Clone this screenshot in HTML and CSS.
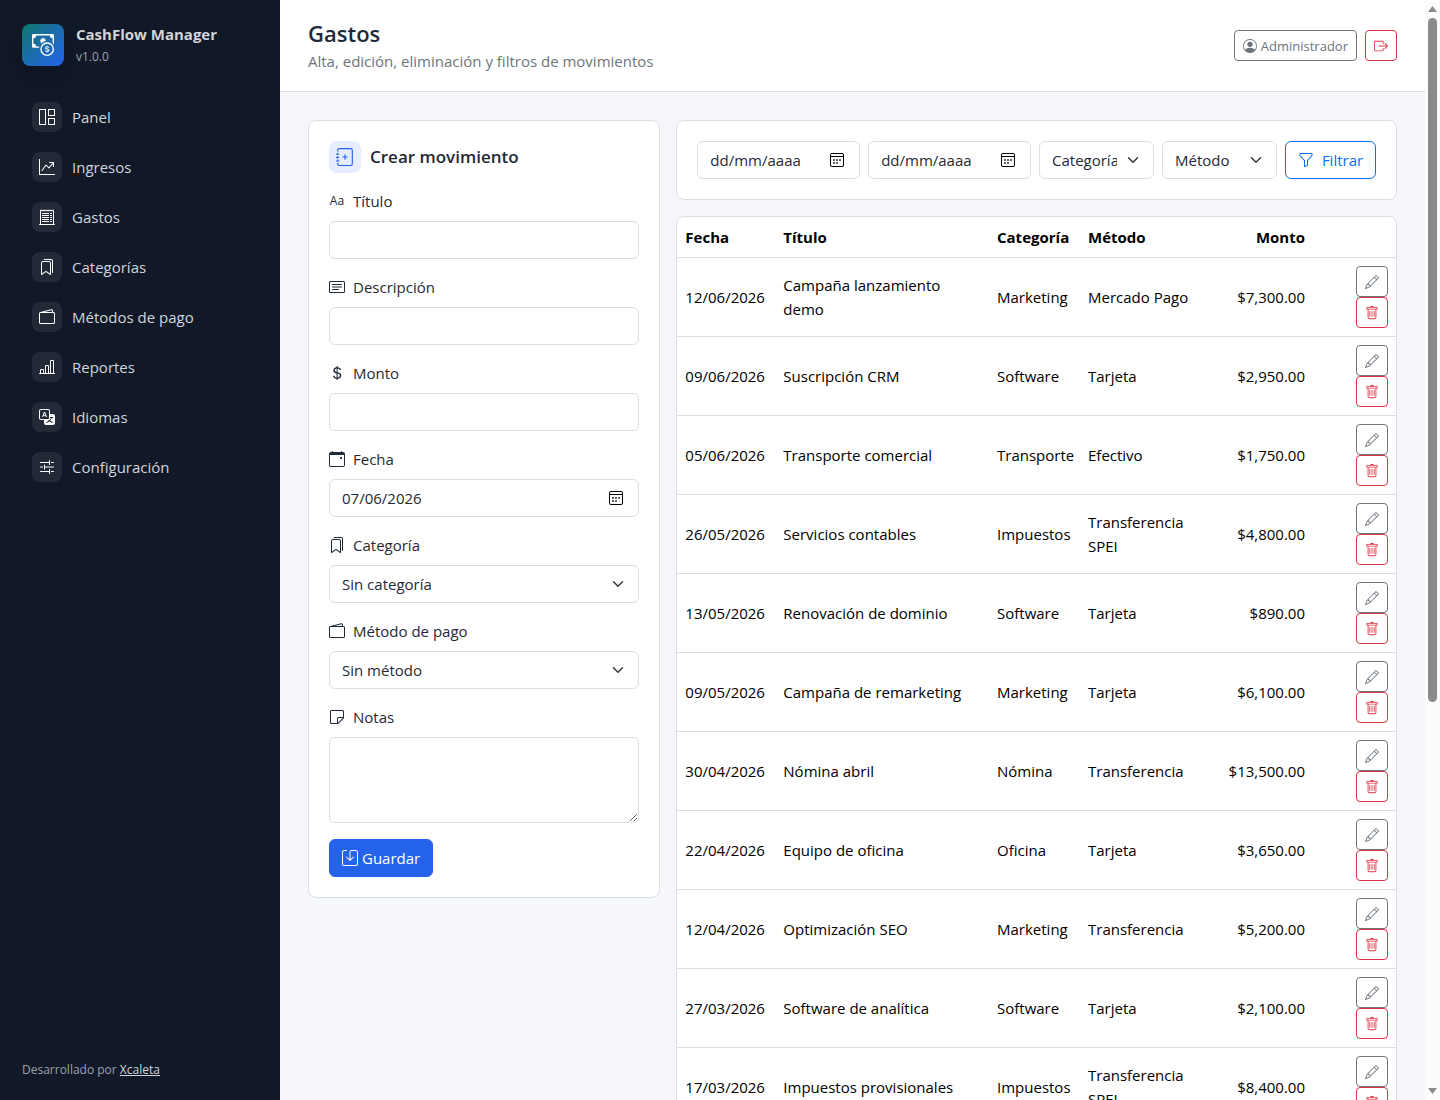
FILE: index.html
```html
<!DOCTYPE html>
<html lang="es">
<head>
<meta charset="utf-8">
<meta name="viewport" content="width=device-width, initial-scale=1">
<title>Gastos - CashFlow Manager</title>
<link rel="stylesheet" href="styles.css">
</head>
<body>
<svg class="sprite" aria-hidden="true">
  <symbol id="cash-coin" viewBox="0 0 16 16"><path fill-rule="evenodd" d="M11 15a4 4 0 1 0 0-8 4 4 0 0 0 0 8m5-4a5 5 0 1 1-10 0 5 5 0 0 1 10 0"/><path d="M9.438 11.944c.047.596.518 1.06 1.363 1.116v.44h.375v-.443c.875-.061 1.386-.529 1.386-1.207 0-.618-.39-.936-1.09-1.1l-.296-.07v-1.2c.376.043.614.248.671.532h.658c-.047-.575-.54-1.024-1.329-1.073V8.5h-.375v.45c-.747.073-1.255.522-1.255 1.158 0 .562.378.92 1.007 1.066l.248.061v1.272c-.384-.058-.639-.27-.696-.563h-.668zm1.36-1.354c-.369-.085-.569-.26-.569-.522 0-.294.216-.514.572-.578v1.1zm.432.746c.449.104.655.272.655.569 0 .339-.257.571-.709.614v-1.195z"/><path d="M1 0a1 1 0 0 0-1 1v8a1 1 0 0 0 1 1h4.083q.088-.517.258-1H3a2 2 0 0 0-2-2V3a2 2 0 0 0 2-2h10a2 2 0 0 0 2 2v3.528c.38.34.717.728 1 1.154V1a1 1 0 0 0-1-1z"/><path d="M9.998 5.083 10 5a2 2 0 1 0-3.132 1.65 6 6 0 0 1 3.13-1.567"/></symbol>
  <symbol id="panel" viewBox="0 0 16 16"><path fill-rule="evenodd" d="M0 0h7v16H0zm1 1v14h5V1zM9 0h7v7H9zm1 1v5h5V1zM9 9h7v7H9zm1 1v5h5v-5z"/></symbol>
  <symbol id="graph-up" viewBox="0 0 16 16"><path fill-rule="evenodd" d="M0 0h1v15h15v1H0zm10 3.5a.5.5 0 0 1 .5-.5h4a.5.5 0 0 1 .5.5v4a.5.5 0 0 1-1 0V4.9l-3.613 4.417a.5.5 0 0 1-.74.037L7.06 6.767l-3.656 5.027a.5.5 0 0 1-.808-.588l4-5.5a.5.5 0 0 1 .758-.06l2.609 2.61L13.445 4H10.5a.5.5 0 0 1-.5-.5"/></symbol>
  <symbol id="receipt" viewBox="0 0 16 16"><path d="M3 4h7v1H3zm0 2h7v1H3zm0 2h7v1H3zm0 2h7v1H3zm0 2h7v1H3zM11 4h2v1h-2zm0 2h2v1h-2zm0 2h2v1h-2zm0 2h2v1h-2zm0 2h2v1h-2z"/><path d="M2.354.646a.5.5 0 0 0-.801.13l-.5 1A.5.5 0 0 0 1 2v13H.5a.5.5 0 0 0 0 1h15a.5.5 0 0 0 0-1H15V2a.5.5 0 0 0-.053-.224l-.5-1a.5.5 0 0 0-.8-.13L13 1.293l-.646-.647a.5.5 0 0 0-.708 0L11 1.293l-.646-.647a.5.5 0 0 0-.708 0L9 1.293 8.354.646a.5.5 0 0 0-.708 0L7 1.293 6.354.646a.5.5 0 0 0-.708 0L5 1.293 4.354.646a.5.5 0 0 0-.708 0L3 1.293zm-.217 1.198.51.51a.5.5 0 0 0 .707 0L4 1.707l.646.647a.5.5 0 0 0 .708 0L6 1.707l.646.647a.5.5 0 0 0 .708 0L8 1.707l.646.647a.5.5 0 0 0 .708 0L10 1.707l.646.647a.5.5 0 0 0 .708 0L12 1.707l.646.647a.5.5 0 0 0 .708 0l.509-.51.137.274V15H2V2.118z"/></symbol>
  <symbol id="bookmarks" viewBox="0 0 16 16"><path d="M2 4a2 2 0 0 1 2-2h6a2 2 0 0 1 2 2v11.5a.5.5 0 0 1-.777.416L7 13.101l-4.223 2.815A.5.5 0 0 1 2 15.5zm2-1a1 1 0 0 0-1 1v10.566l3.723-2.482a.5.5 0 0 1 .554 0L11 14.566V4a1 1 0 0 0-1-1z"/><path d="M4.268 1H12a1 1 0 0 1 1 1v11.768l.223.148A.5.5 0 0 0 14 13.5V2a2 2 0 0 0-2-2H6a2 2 0 0 0-1.732 1"/></symbol>
  <symbol id="wallet" viewBox="0 0 16 16"><path d="M12.136.326A1.5 1.5 0 0 1 14 1.78V3h.5A1.5 1.5 0 0 1 16 4.5v9a1.5 1.5 0 0 1-1.5 1.5h-13A1.5 1.5 0 0 1 0 13.5v-9a1.5 1.5 0 0 1 1.432-1.499zM5.562 3H13V1.78a.5.5 0 0 0-.621-.484zM1.5 4a.5.5 0 0 0-.5.5v9a.5.5 0 0 0 .5.5h13a.5.5 0 0 0 .5-.5v-9a.5.5 0 0 0-.5-.5z"/></symbol>
  <symbol id="bars" viewBox="0 0 16 16"><path d="M11 2a1 1 0 0 1 1-1h2a1 1 0 0 1 1 1v12h.5a.5.5 0 0 1 0 1H.5a.5.5 0 0 1 0-1H1v-3a1 1 0 0 1 1-1h2a1 1 0 0 1 1 1v3h1V7a1 1 0 0 1 1-1h2a1 1 0 0 1 1 1v7h1zm1 12h2V2h-2zm-3 0V7H7v7zm-5 0v-3H2v3z"/></symbol>
  <symbol id="translate" viewBox="0 0 16 16"><path d="M4.545 6.714 4.11 8H3l1.862-5h1.284L8 8H6.833l-.435-1.286zm1.634-.736L5.5 3.956h-.049l-.679 2.022z"/><path d="M0 2a2 2 0 0 1 2-2h7a2 2 0 0 1 2 2v3h3a2 2 0 0 1 2 2v7a2 2 0 0 1-2 2H7a2 2 0 0 1-2-2v-3H2a2 2 0 0 1-2-2zm2-1a1 1 0 0 0-1 1v7a1 1 0 0 0 1 1h7a1 1 0 0 0 1-1V2a1 1 0 0 0-1-1zm7.138 9.995q.289.451.63.846c-.748.575-1.673 1.001-2.768 1.292.178.217.451.635.555.867 1.125-.359 2.08-.844 2.886-1.494.777.665 1.739 1.165 2.93 1.472.133-.254.414-.673.629-.89-1.125-.253-2.057-.694-2.82-1.284.681-.747 1.222-1.651 1.621-2.757H14V8h-3v1.047h.765c-.318.844-.74 1.546-1.272 2.13a6 6 0 0 1-.415-.492 2 2 0 0 1-.94.31"/></symbol>
  <symbol id="sliders" viewBox="0 0 16 16"><path d="M10.5 1a.5.5 0 0 1 .5.5v4a.5.5 0 0 1-1 0V4H1.5a.5.5 0 0 1 0-1H10V1.5a.5.5 0 0 1 .5-.5M12 3.5a.5.5 0 0 1 .5-.5h2a.5.5 0 0 1 0 1h-2a.5.5 0 0 1-.5-.5m-6.5 2A.5.5 0 0 1 6 6v1.5h8.5a.5.5 0 0 1 0 1H6V10a.5.5 0 0 1-1 0V6a.5.5 0 0 1 .5-.5M1 8a.5.5 0 0 1 .5-.5h2a.5.5 0 0 1 0 1h-2A.5.5 0 0 1 1 8m9.5 2a.5.5 0 0 1 .5.5v4a.5.5 0 0 1-1 0V13H1.5a.5.5 0 0 1 0-1H10v-1.5a.5.5 0 0 1 .5-.5m1.5 2.5a.5.5 0 0 1 .5-.5h2a.5.5 0 0 1 0 1h-2a.5.5 0 0 1-.5-.5"/></symbol>
  <symbol id="journal-plus" viewBox="0 0 16 16"><path d="M8 5.5a.5.5 0 0 1 .5.5v1.5H10a.5.5 0 0 1 0 1H8.5V10a.5.5 0 0 1-1 0V8.5H6a.5.5 0 0 1 0-1h1.5V6a.5.5 0 0 1 .5-.5"/><path d="M3 0h10a2 2 0 0 1 2 2v12a2 2 0 0 1-2 2H3a2 2 0 0 1-2-2v-1h1v1a1 1 0 0 0 1 1h10a1 1 0 0 0 1-1V2a1 1 0 0 0-1-1H3a1 1 0 0 0-1 1v1H1V2a2 2 0 0 1 2-2"/><path d="M1 5v-.5a.5.5 0 0 1 1 0V5h.5a.5.5 0 0 1 0 1h-2a.5.5 0 0 1 0-1zm0 3v-.5a.5.5 0 0 1 1 0V8h.5a.5.5 0 0 1 0 1h-2a.5.5 0 0 1 0-1zm0 3v-.5a.5.5 0 0 1 1 0v.5h.5a.5.5 0 0 1 0 1h-2a.5.5 0 0 1 0-1z"/></symbol>
  <symbol id="card-text" viewBox="0 0 16 16"><path d="M14.5 3a.5.5 0 0 1 .5.5v9a.5.5 0 0 1-.5.5h-13a.5.5 0 0 1-.5-.5v-9a.5.5 0 0 1 .5-.5zm-13-1A1.5 1.5 0 0 0 0 3.5v9A1.5 1.5 0 0 0 1.5 14h13a1.5 1.5 0 0 0 1.5-1.5v-9A1.5 1.5 0 0 0 14.5 2z"/><path d="M3 5.5a.5.5 0 0 1 .5-.5h9a.5.5 0 0 1 0 1h-9a.5.5 0 0 1-.5-.5M3 8a.5.5 0 0 1 .5-.5h9a.5.5 0 0 1 0 1h-9A.5.5 0 0 1 3 8m0 2.5a.5.5 0 0 1 .5-.5h6a.5.5 0 0 1 0 1h-6a.5.5 0 0 1-.5-.5"/></symbol>
  <symbol id="dollar" viewBox="0 0 16 16"><path d="M4 10.781c.148 1.667 1.513 2.85 3.591 3.003V15h1.043v-1.216c2.27-.179 3.678-1.438 3.678-3.3 0-1.59-.947-2.51-2.956-3.028l-.722-.187V3.467c1.122.11 1.879.714 2.07 1.616h1.47c-.166-1.6-1.54-2.748-3.54-2.875V1H7.591v1.233c-1.939.23-3.27 1.472-3.27 3.156 0 1.454.966 2.483 2.661 2.917l.61.162v4.031c-1.149-.17-1.94-.8-2.131-1.718zm3.391-3.836c-1.043-.263-1.6-.825-1.6-1.616 0-.944.704-1.641 1.8-1.828v3.495l-.2-.05zm1.591 1.872c1.287.323 1.852.859 1.852 1.769 0 1.097-.826 1.828-2.2 1.939V8.73z"/></symbol>
  <symbol id="calendar" viewBox="0 0 16 16"><path d="M11 6.5a.5.5 0 0 1 .5-.5h1a.5.5 0 0 1 .5.5v1a.5.5 0 0 1-.5.5h-1a.5.5 0 0 1-.5-.5z"/><path d="M3.5 0a.5.5 0 0 1 .5.5V1h8V.5a.5.5 0 0 1 1 0V1h1a2 2 0 0 1 2 2v11a2 2 0 0 1-2 2H2a2 2 0 0 1-2-2V3a2 2 0 0 1 2-2h1V.5a.5.5 0 0 1 .5-.5M1 4v10a1 1 0 0 0 1 1h12a1 1 0 0 0 1-1V4z"/></symbol>
  <symbol id="sticky" viewBox="0 0 16 16"><path d="M2.5 1A1.5 1.5 0 0 0 1 2.5v11A1.5 1.5 0 0 0 2.5 15h6.086a1.5 1.5 0 0 0 1.06-.44l4.915-4.914A1.5 1.5 0 0 0 15 8.586V2.5A1.5 1.5 0 0 0 13.5 1zM2 2.5a.5.5 0 0 1 .5-.5h11a.5.5 0 0 1 .5.5V8H9.5A1.5 1.5 0 0 0 8 9.5V14H2.5a.5.5 0 0 1-.5-.5zm7 11.293V9.5a.5.5 0 0 1 .5-.5h4.293z"/></symbol>
  <symbol id="save" viewBox="0 0 16 16"><path d="M2 1a1 1 0 0 0-1 1v12a1 1 0 0 0 1 1h12a1 1 0 0 0 1-1V2a1 1 0 0 0-1-1H9.5a1 1 0 0 0-1 1v7.293l2.646-2.647a.5.5 0 0 1 .708.708l-3.5 3.5a.5.5 0 0 1-.708 0l-3.5-3.5a.5.5 0 1 1 .708-.708L7.5 9.293V2a2 2 0 0 1 2-2H14a2 2 0 0 1 2 2v12a2 2 0 0 1-2 2H2a2 2 0 0 1-2-2V2a2 2 0 0 1 2-2h2.500a.5.5 0 0 1 0 1z"/></symbol>
  <symbol id="person" viewBox="0 0 16 16"><path d="M11 6a3 3 0 1 1-6 0 3 3 0 0 1 6 0"/><path fill-rule="evenodd" d="M0 8a8 8 0 1 1 16 0A8 8 0 0 1 0 8m8-7a7 7 0 0 0-5.468 11.37C3.242 11.226 4.805 10 8 10s4.757 1.225 5.468 2.37A7 7 0 0 0 8 1"/></symbol>
  <symbol id="logout" viewBox="0 0 16 16"><path d="M10 12.5a.5.5 0 0 1-.5.5h-8a.5.5 0 0 1-.5-.5v-9a.5.5 0 0 1 .5-.5h8a.5.5 0 0 1 .5.5v2a.5.5 0 0 0 1 0v-2A1.5 1.5 0 0 0 9.5 2h-8A1.5 1.5 0 0 0 0 3.5v9A1.5 1.5 0 0 0 1.5 14h8a1.5 1.5 0 0 0 1.5-1.5v-2a.5.5 0 0 0-1 0z"/><path d="M15.854 8.354a.5.5 0 0 0 0-.708l-3-3a.5.5 0 0 0-.708.708L14.293 7.5H5.5a.5.5 0 0 0 0 1h8.793l-2.147 2.146a.5.5 0 0 0 .708.708z"/></symbol>
  <symbol id="funnel" viewBox="0 0 16 16"><path d="M1.500 1.5A.5.5 0 0 1 2 1h12a.5.5 0 0 1 .5.5v2a.5.5 0 0 1-.128.334L10 8.692V13.5a.5.5 0 0 1-.342.474l-3 1A.5.5 0 0 1 6 14.5V8.692L1.628 3.834A.5.5 0 0 1 1.5 3.5zm1 .5v1.308l4.372 4.858A.5.5 0 0 1 7 8.5v5.306l2-.666V8.5a.5.5 0 0 1 .128-.334L13.5 3.308V2z"/></symbol>
  <symbol id="pencil" viewBox="0 0 16 16"><path d="M12.146.146a.5.5 0 0 1 .708 0l3 3a.5.5 0 0 1 0 .708l-10 10a.5.5 0 0 1-.168.11l-5 2a.5.5 0 0 1-.65-.65l2-5a.5.5 0 0 1 .11-.168zM11.207 2.5 13.5 4.793 14.793 3.5 12.5 1.207zm1.586 3L10.5 3.207 4 9.707V10h.5a.5.5 0 0 1 .5.5v.5h.5a.5.5 0 0 1 .5.5v.5h.293zm-9.761 5.175-.106.106-1.528 3.821 3.821-1.528.106-.106A.5.5 0 0 1 5 12.5V12h-.5a.5.5 0 0 1-.5-.5V11h-.5a.5.5 0 0 1-.468-.325"/></symbol>
  <symbol id="trash" viewBox="0 0 16 16"><path d="M5.500 5.500A.5.500 0 0 1 6 6v6a.5.500 0 0 1-1 0V6a.5.500 0 0 1 .5-.5m2.500 0a.5.500 0 0 1 .5.5v6a.5.500 0 0 1-1 0V6a.5.500 0 0 1 .5-.5m3 .5a.5.500 0 0 0-1 0v6a.5.500 0 0 0 1 0z"/><path d="M14.5 3a1 1 0 0 1-1 1H13v9a2 2 0 0 1-2 2H5a2 2 0 0 1-2-2V4h-.5a1 1 0 0 1-1-1V2a1 1 0 0 1 1-1H6a1 1 0 0 1 1-1h2a1 1 0 0 1 1 1h3.500a1 1 0 0 1 1 1zM4.118 4 4 4.059V13a1 1 0 0 0 1 1h6a1 1 0 0 0 1-1V4.059L11.882 4zM2.500 3h11V2h-11z"/></symbol>
  <symbol id="picker" viewBox="0 0 16 16"><path fill-rule="evenodd" d="M3 1h10a2 2 0 0 1 2 2v10a2 2 0 0 1-2 2H3a2 2 0 0 1-2-2V3a2 2 0 0 1 2-2m-1 4v8a1 1 0 0 0 1 1h10a1 1 0 0 0 1-1V5zm0-1h12V3a1 1 0 0 0-1-1H3a1 1 0 0 0-1 1z"/><path d="M4.200 7.200h1.600v1.600H4.200zm3 0h1.600v1.600H7.200zm3 0h1.600v1.600h-1.600zm-6 3h1.600v1.600H4.200zm3 0h1.600v1.600H7.200z"/></symbol>
</svg>
<div class="app">
  <aside class="sidebar">
    <div class="brand">
      <span class="brand-mark"><svg class="icon icon-brand"><use href="#cash-coin"/></svg></span>
      <div class="brand-text"><strong>CashFlow Manager</strong><small>v1.0.0</small></div>
    </div>
    <nav class="menu">
      <a href="#panel-page"><span class="menu-icon"><svg class="icon"><use href="#panel"/></svg></span>Panel</a>
      <a href="#ingresos"><span class="menu-icon"><svg class="icon"><use href="#graph-up"/></svg></span>Ingresos</a>
      <a href="#gastos"><span class="menu-icon"><svg class="icon"><use href="#receipt"/></svg></span>Gastos</a>
      <a href="#categorias"><span class="menu-icon"><svg class="icon"><use href="#bookmarks"/></svg></span>Categorías</a>
      <a href="#metodos"><span class="menu-icon"><svg class="icon"><use href="#wallet"/></svg></span>Métodos de pago</a>
      <a href="#reportes"><span class="menu-icon"><svg class="icon"><use href="#bars"/></svg></span>Reportes</a>
      <a href="#idiomas"><span class="menu-icon"><svg class="icon"><use href="#translate"/></svg></span>Idiomas</a>
      <a href="#configuracion"><span class="menu-icon"><svg class="icon"><use href="#sliders"/></svg></span>Configuración</a>
    </nav>
    <p class="credit">Desarrollado por <a href="#xcaleta">Xcaleta</a></p>
  </aside>

  <div class="page">
    <header class="topbar">
      <div>
        <h1>Gastos</h1>
        <p>Alta, edición, eliminación y filtros de movimientos</p>
      </div>
      <div class="topbar-actions">
        <button type="button" class="btn btn-sm btn-gray"><svg class="icon icon-sm"><use href="#person"/></svg>Administrador</button>
        <button type="button" class="btn btn-sm btn-red" aria-label="Salir"><svg class="icon icon-sm"><use href="#logout"/></svg></button>
      </div>
    </header>

    <main class="content">
      <form class="card entry">
        <h2><span class="title-icon"><svg class="icon"><use href="#journal-plus"/></svg></span>Crear movimiento</h2>
        <div class="field">
          <label for="titulo"><span class="glyph" aria-hidden="true">Aa</span>Título</label>
          <input class="control" id="titulo" type="text">
        </div>
        <div class="field">
          <label for="descripcion"><svg class="icon"><use href="#card-text"/></svg>Descripción</label>
          <input class="control" id="descripcion" type="text">
        </div>
        <div class="field">
          <label for="monto"><svg class="icon"><use href="#dollar"/></svg>Monto</label>
          <input class="control" id="monto" type="text" inputmode="decimal">
        </div>
        <div class="field">
          <label for="fecha"><svg class="icon"><use href="#calendar"/></svg>Fecha</label>
          <div class="control date"><input id="fecha" type="text" value="07/06/2026"><button type="button" aria-label="Abrir calendario"><svg class="icon"><use href="#picker"/></svg></button></div>
        </div>
        <div class="field">
          <label for="categoria"><svg class="icon"><use href="#bookmarks"/></svg>Categoría</label>
          <select class="control" id="categoria"><option>Sin categoría</option></select>
        </div>
        <div class="field">
          <label for="metodo"><svg class="icon"><use href="#wallet"/></svg>Método de pago</label>
          <select class="control" id="metodo"><option>Sin método</option></select>
        </div>
        <div class="field">
          <label for="notas"><svg class="icon"><use href="#sticky"/></svg>Notas</label>
          <textarea class="control" id="notas"></textarea>
        </div>
        <button type="submit" class="btn btn-save"><svg class="icon"><use href="#save"/></svg>Guardar</button>
      </form>

      <section class="listing">
        <form class="card filters">
          <div class="control date"><input type="text" placeholder="dd/mm/aaaa" aria-label="Desde"><button type="button" aria-label="Abrir calendario"><svg class="icon"><use href="#picker"/></svg></button></div>
          <div class="control date"><input type="text" placeholder="dd/mm/aaaa" aria-label="Hasta"><button type="button" aria-label="Abrir calendario"><svg class="icon"><use href="#picker"/></svg></button></div>
          <select class="control" aria-label="Categoría"><option>Categoría</option></select>
          <select class="control" aria-label="Método"><option>Método</option></select>
          <button type="submit" class="btn btn-blue"><svg class="icon"><use href="#funnel"/></svg>Filtrar</button>
        </form>

        <div class="card table-card">
          <table>
            <colgroup><col class="c-date"><col><col class="c-cat"><col class="c-method"><col class="c-amount"><col class="c-actions"></colgroup>
            <thead>
              <tr><th>Fecha</th><th>Título</th><th>Categoría</th><th>Método</th><th class="num">Monto</th><th></th></tr>
            </thead>
            <tbody>
              <tr><td>12/06/2026</td><td>Campaña lanzamiento demo</td><td>Marketing</td><td>Mercado Pago</td><td class="num">$7,300.00</td><td><div class="actions"><button type="button" class="btn btn-sm btn-gray" aria-label="Editar"><svg class="icon icon-sm"><use href="#pencil"/></svg></button><button type="button" class="btn btn-sm btn-red" aria-label="Eliminar"><svg class="icon icon-sm"><use href="#trash"/></svg></button></div></td></tr>
              <tr><td>09/06/2026</td><td>Suscripción CRM</td><td>Software</td><td>Tarjeta</td><td class="num">$2,950.00</td><td><div class="actions"><button type="button" class="btn btn-sm btn-gray" aria-label="Editar"><svg class="icon icon-sm"><use href="#pencil"/></svg></button><button type="button" class="btn btn-sm btn-red" aria-label="Eliminar"><svg class="icon icon-sm"><use href="#trash"/></svg></button></div></td></tr>
              <tr><td>05/06/2026</td><td>Transporte comercial</td><td>Transporte</td><td>Efectivo</td><td class="num">$1,750.00</td><td><div class="actions"><button type="button" class="btn btn-sm btn-gray" aria-label="Editar"><svg class="icon icon-sm"><use href="#pencil"/></svg></button><button type="button" class="btn btn-sm btn-red" aria-label="Eliminar"><svg class="icon icon-sm"><use href="#trash"/></svg></button></div></td></tr>
              <tr><td>26/05/2026</td><td>Servicios contables</td><td>Impuestos</td><td>Transferencia SPEI</td><td class="num">$4,800.00</td><td><div class="actions"><button type="button" class="btn btn-sm btn-gray" aria-label="Editar"><svg class="icon icon-sm"><use href="#pencil"/></svg></button><button type="button" class="btn btn-sm btn-red" aria-label="Eliminar"><svg class="icon icon-sm"><use href="#trash"/></svg></button></div></td></tr>
              <tr><td>13/05/2026</td><td>Renovación de dominio</td><td>Software</td><td>Tarjeta</td><td class="num">$890.00</td><td><div class="actions"><button type="button" class="btn btn-sm btn-gray" aria-label="Editar"><svg class="icon icon-sm"><use href="#pencil"/></svg></button><button type="button" class="btn btn-sm btn-red" aria-label="Eliminar"><svg class="icon icon-sm"><use href="#trash"/></svg></button></div></td></tr>
              <tr><td>09/05/2026</td><td>Campaña de remarketing</td><td>Marketing</td><td>Tarjeta</td><td class="num">$6,100.00</td><td><div class="actions"><button type="button" class="btn btn-sm btn-gray" aria-label="Editar"><svg class="icon icon-sm"><use href="#pencil"/></svg></button><button type="button" class="btn btn-sm btn-red" aria-label="Eliminar"><svg class="icon icon-sm"><use href="#trash"/></svg></button></div></td></tr>
              <tr><td>30/04/2026</td><td>Nómina abril</td><td>Nómina</td><td>Transferencia</td><td class="num">$13,500.00</td><td><div class="actions"><button type="button" class="btn btn-sm btn-gray" aria-label="Editar"><svg class="icon icon-sm"><use href="#pencil"/></svg></button><button type="button" class="btn btn-sm btn-red" aria-label="Eliminar"><svg class="icon icon-sm"><use href="#trash"/></svg></button></div></td></tr>
              <tr><td>22/04/2026</td><td>Equipo de oficina</td><td>Oficina</td><td>Tarjeta</td><td class="num">$3,650.00</td><td><div class="actions"><button type="button" class="btn btn-sm btn-gray" aria-label="Editar"><svg class="icon icon-sm"><use href="#pencil"/></svg></button><button type="button" class="btn btn-sm btn-red" aria-label="Eliminar"><svg class="icon icon-sm"><use href="#trash"/></svg></button></div></td></tr>
              <tr><td>12/04/2026</td><td>Optimización SEO</td><td>Marketing</td><td>Transferencia</td><td class="num">$5,200.00</td><td><div class="actions"><button type="button" class="btn btn-sm btn-gray" aria-label="Editar"><svg class="icon icon-sm"><use href="#pencil"/></svg></button><button type="button" class="btn btn-sm btn-red" aria-label="Eliminar"><svg class="icon icon-sm"><use href="#trash"/></svg></button></div></td></tr>
              <tr><td>27/03/2026</td><td>Software de analítica</td><td>Software</td><td>Tarjeta</td><td class="num">$2,100.00</td><td><div class="actions"><button type="button" class="btn btn-sm btn-gray" aria-label="Editar"><svg class="icon icon-sm"><use href="#pencil"/></svg></button><button type="button" class="btn btn-sm btn-red" aria-label="Eliminar"><svg class="icon icon-sm"><use href="#trash"/></svg></button></div></td></tr>
              <tr><td>17/03/2026</td><td>Impuestos provisionales</td><td>Impuestos</td><td>Transferencia SPEI</td><td class="num">$8,400.00</td><td><div class="actions"><button type="button" class="btn btn-sm btn-gray" aria-label="Editar"><svg class="icon icon-sm"><use href="#pencil"/></svg></button><button type="button" class="btn btn-sm btn-red" aria-label="Eliminar"><svg class="icon icon-sm"><use href="#trash"/></svg></button></div></td></tr>
            </tbody>
          </table>
        </div>
      </section>
    </main>
  </div>

  <div class="scrollbar" aria-hidden="true">
    <svg class="scroll-arrow" viewBox="0 0 9 6"><path d="M4.500 0 9 6H0z"/></svg>
    <div class="scroll-track"><div class="scroll-thumb"></div></div>
    <svg class="scroll-arrow" viewBox="0 0 9 6"><path d="M0 0h9L4.500 6z"/></svg>
  </div>
</div>
</body>
</html>
```
FILE: styles.css
```css
:root {
  --line: #d9dee8;
  --ink: #1f2937;
  --gray: #6c757d;
  --red: #dc3545;
}

*, *::before, *::after { box-sizing: border-box; }

body {
  margin: 0;
  background: #f5f7fb;
  color: var(--ink);
  font: 15px/24px "Open Sans", "Noto Sans", sans-serif;
}

h1, h2, p { margin: 0; }
button, input, select, textarea { font: inherit; color: inherit; }

.sprite { display: none; }
.icon { display: block; flex: none; width: 16px; height: 16px; fill: currentColor; }
.icon-sm { width: 14px; height: 14px; }
.icon-brand { width: 22px; height: 22px; }

.app { display: flex; height: 100vh; overflow: hidden; }

/* Sidebar */
.sidebar {
  display: flex;
  flex: none;
  flex-direction: column;
  width: 280px;
  padding: 22px 22px 21px;
  background: #111827;
  color: #d1d5db;
}
.brand { display: flex; align-items: center; gap: 12px; }
.brand-mark {
  display: grid;
  place-items: center;
  width: 42px;
  height: 42px;
  border-radius: 8px;
  background: linear-gradient(135deg, #0f766e, #2563eb);
  box-shadow: 0 10px 24px rgba(0, 0, 0, .22);
  color: #fff;
}
.brand-text { display: grid; }
.brand-text strong { font-weight: 700; }
.brand-text small { font-size: 12px; line-height: 21px; color: #9ca3af; }
.menu { display: grid; gap: 6px; margin-top: 28px; }
.menu a {
  display: flex;
  align-items: center;
  gap: 10px;
  height: 44px;
  padding: 0 10px;
  color: inherit;
  text-decoration: none;
}
.menu-icon {
  display: grid;
  place-items: center;
  width: 30px;
  height: 30px;
  border-radius: 8px;
  background: rgba(255, 255, 255, .08);
  color: #fff;
}
.credit { margin-top: auto; font-size: 12px; line-height: 18px; color: #9ca3af; }
.credit a { color: #d1d5db; }

/* Page */
.page { flex: 1; min-width: 0; overflow: hidden; }
.topbar {
  display: flex;
  align-items: center;
  justify-content: space-between;
  padding: 18px 28px;
  border-bottom: 1px solid var(--line);
  background: #fff;
}
.topbar h1 { font-size: 22px; line-height: 31px; font-weight: 600; }
.topbar p { color: var(--gray); }
.topbar-actions { display: flex; gap: 8px; }

.content {
  display: grid;
  grid-template-columns: repeat(12, minmax(0, 1fr));
  align-items: start;
  gap: 16px;
  padding: 28px;
}
.entry { grid-column: span 4; }
.listing { display: grid; grid-column: span 8; gap: 16px; }

.card { border: 1px solid var(--line); border-radius: 8px; background: #fff; }

/* Controls */
.btn {
  display: inline-flex;
  align-items: center;
  justify-content: center;
  gap: 4px;
  height: 38px;
  padding: 0 12px;
  border: 1px solid;
  border-radius: 6px;
  background: #fff;
  cursor: pointer;
}
.btn-sm { height: 31px; padding: 0 8px; border-radius: 4px; font-size: 13px; }
.btn-gray { color: var(--gray); }
.btn-red { color: var(--red); }
.btn-blue { gap: 8px; color: #0d6efd; }
.btn-save { border-color: #2563eb; background: #2563eb; color: #fff; }

.control {
  display: block;
  width: 100%;
  height: 38px;
  padding: 0 12px;
  border: 1px solid var(--line);
  border-radius: 6px;
  background: #fff;
}
select.control {
  appearance: none;
  padding-right: 36px;
  background: #fff url("data:image/svg+xml,%3Csvg xmlns='http://www.w3.org/2000/svg' viewBox='0 0 16 16'%3E%3Cpath fill='none' stroke='%23343a40' stroke-linecap='round' stroke-linejoin='round' stroke-width='2' d='m2 5 6 6 6-6'/%3E%3C/svg%3E") no-repeat right 14px center / 12px 12px;
}
textarea.control { height: 86px; resize: vertical; }
.date { display: flex; align-items: center; }
.date input { flex: 1; width: 0; min-width: 0; padding: 0; border: 0; background: none; outline: 0; }
.date input::placeholder { color: inherit; opacity: 1; }
.date button { margin-right: 2px; padding: 0; border: 0; background: none; color: #000; }

/* Entry form */
.entry { padding: 20px; }
.entry h2 {
  display: flex;
  align-items: center;
  gap: 9px;
  margin-bottom: 16px;
  font-size: 17px;
  font-weight: 600;
}
.title-icon {
  display: grid;
  place-items: center;
  width: 32px;
  height: 32px;
  border-radius: 8px;
  background: #e5edff;
  color: #2563eb;
}
.title-icon .icon { width: 18px; height: 18px; }
.field { margin-bottom: 16px; }
.field label { display: flex; align-items: center; gap: 8px; margin-bottom: 8px; }
.glyph { width: 16px; font-size: 12px; text-align: center; }

/* Filters */
.filters {
  display: grid;
  grid-template-columns: 1fr 1fr 115px 115px 91px;
  gap: 8px;
  padding: 20px;
}

/* Table */
.table-card { overflow: hidden; }
table { width: 100%; table-layout: fixed; border-collapse: collapse; color: #000; }
.c-date { width: 98px; }
.c-cat { width: 91px; }
.c-method { width: 133px; }
.c-amount { width: 100px; }
.c-actions { width: 83px; }
th, td { padding: 8px; border-bottom: 1px solid var(--line); text-align: left; vertical-align: middle; }
th { font-weight: 700; }
.num { text-align: right; }
.actions { display: flex; flex-direction: column; align-items: flex-end; }

/* Scrollbar */
.scrollbar {
  display: flex;
  flex: none;
  flex-direction: column;
  align-items: center;
  width: 15px;
  padding: 6px 0;
  background: #fcfcfc;
  fill: #8b8b8b;
}
.scroll-arrow { width: 9px; height: 6px; }
.scroll-track { display: grid; flex: 1; grid-template-rows: 9fr 5fr; width: 9px; padding: 6px 0; }
.scroll-thumb { border-radius: 5px; background: #8b8b8b; }
```
